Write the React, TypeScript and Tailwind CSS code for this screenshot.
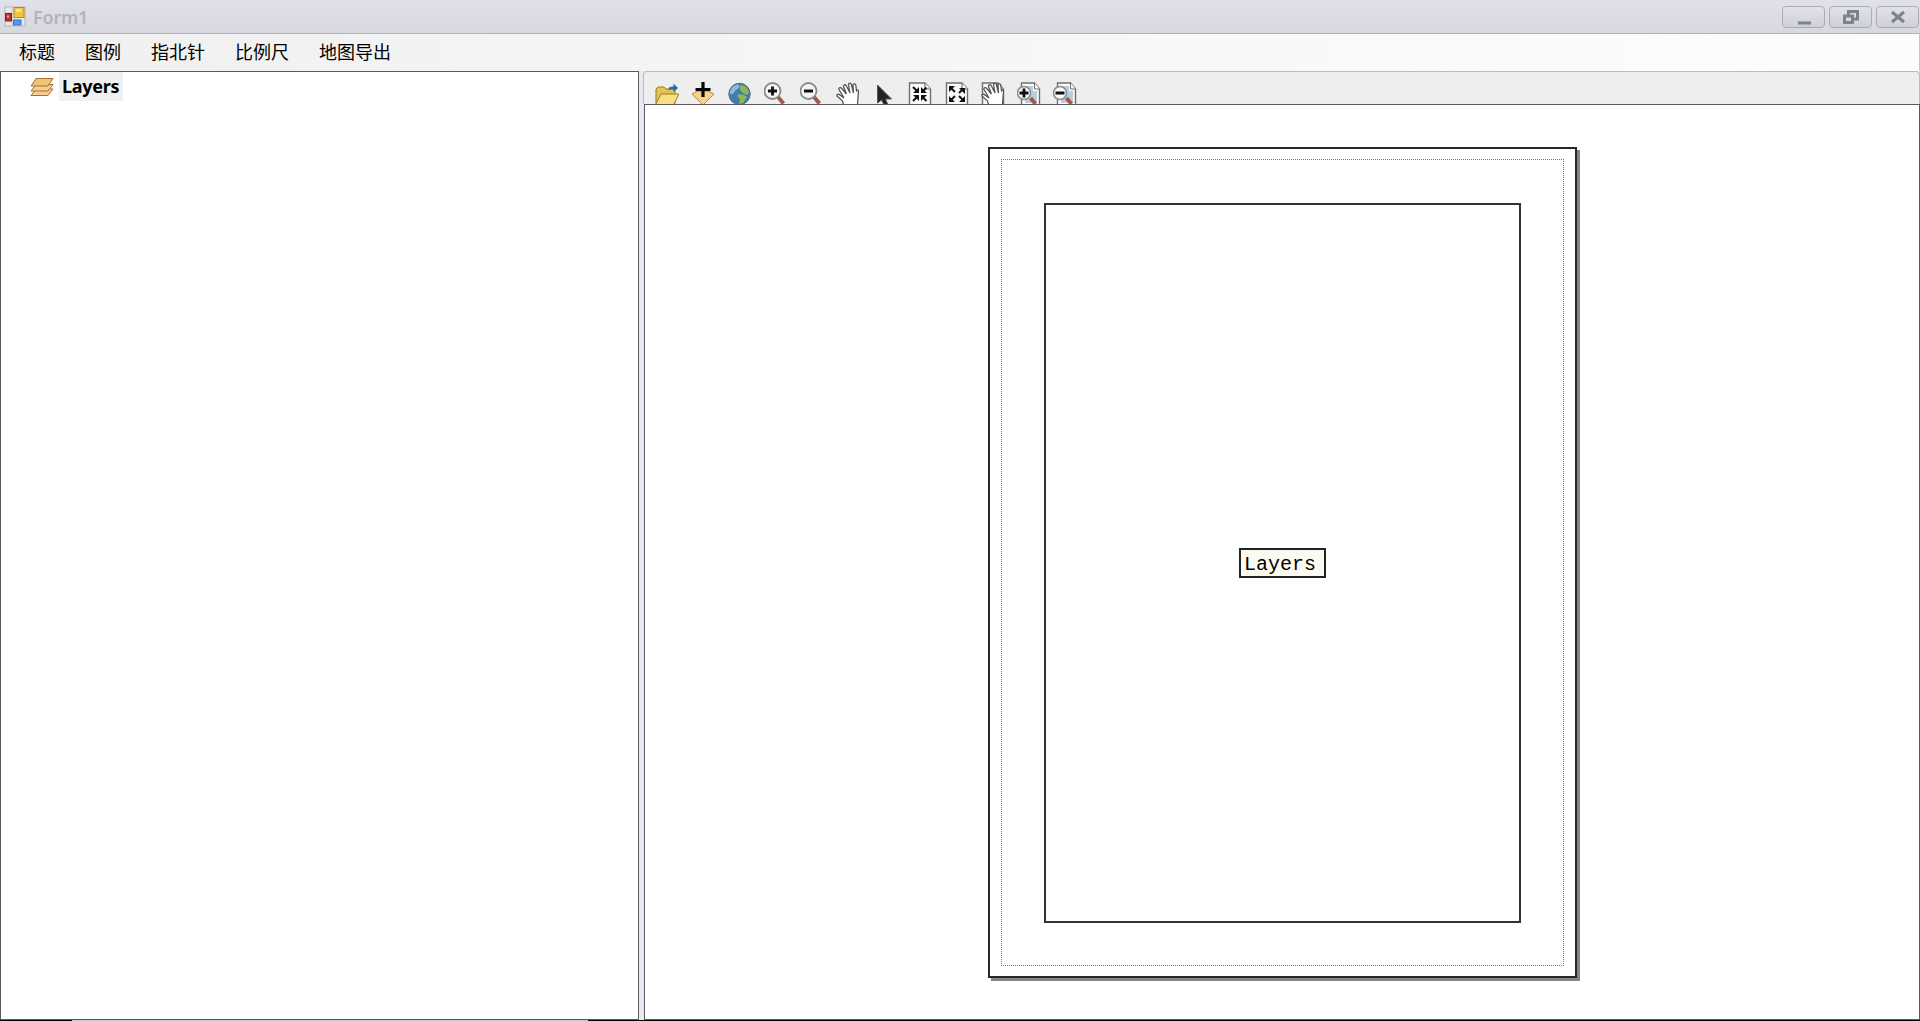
import type { ReactNode } from 'react';

const menus = ['标题', '图例', '指北针', '比例尺', '地图导出'];

function FormIcon() {
  return (
    <svg width="22" height="22" viewBox="0 0 22 22">
      <rect x="1" y="1" width="20" height="19" fill="#e8e8ea" stroke="#b5b5ba" />
      <path d="M1 7h20M8 1v19" stroke="#c4c4c8" />
      <rect x="10" y="1.5" width="10" height="10" fill="#f0c73c" stroke="#b98a1c" />
      <rect x="12" y="3" width="5" height="3" fill="#fbe58a" />
      <rect x="1.5" y="7.5" width="6" height="7.5" fill="#b9332c" stroke="#8d1c1a" />
      <rect x="3" y="9.5" width="2" height="2" fill="#f2a49a" />
      <rect x="9.5" y="14" width="7.5" height="5" fill="#5c94ee" stroke="#3c70d0" />
    </svg>
  );
}

function LayersIcon() {
  return (
    <svg width="24" height="20" viewBox="0 0 24 20" stroke="#a97035" strokeWidth="1" strokeLinejoin="round">
      <path d="M1 18.500 6 12h17l-5 6.500z" fill="#f5cf8d" />
      <path d="M1 14 6 7.500h17L18 14z" fill="#f5cf8d" />
      <path d="M1 9 6 1.500h17L18 9z" fill="#eec578" />
    </svg>
  );
}

function Tool({ children }: { children: ReactNode }) {
  return (
    <svg className="shrink-0" width="24" height="22" viewBox="0 0 24 22" fill="none">
      {children}
    </svg>
  );
}

function Lens({ plus }: { plus?: boolean }) {
  return (
    <>
      <path d="m14 15 5.500 6.500" stroke="#a25a4a" strokeWidth="4" />
      <circle cx="8.500" cy="9" r="8" fill="#f4f4f4" stroke="#8b8b8b" strokeWidth="1.800" />
      <path d="M4 9h9" stroke="#111" strokeWidth="2.800" />
      {plus && <path d="M8.500 4.500v9" stroke="#111" strokeWidth="2.800" />}
    </>
  );
}

function Page() {
  return (
    <>
      <path d="M1.500 24V1h15.500l5.500 6v17" fill="#fafafa" stroke="#6f6f6f" strokeWidth="1.400" />
      <path d="M17 1v6h5.500" fill="#fff" stroke="#6f6f6f" strokeWidth="1.200" />
    </>
  );
}

function PageLens({ plus }: { plus?: boolean }) {
  return (
    <>
      <path d="M4.500 24V1h13l5 6v17" fill="#fafafa" stroke="#6f6f6f" strokeWidth="1.400" />
      <path d="M8 4h8v5h4v12H8z" fill="#b5cfe0" />
      <path d="M17.500 1v6h5" fill="#fff" stroke="#6f6f6f" />
      <path d="m13.500 16 5 6" stroke="#a25a4a" strokeWidth="4" />
      <circle cx="7" cy="11" r="6.500" fill="#fafafa" stroke="#8b8b8b" strokeWidth="1.500" />
      <path d="M2.500 11h9" stroke="#111" strokeWidth="2.800" />
      {plus && <path d="M7 6.500v9" stroke="#111" strokeWidth="2.800" />}
    </>
  );
}

function Hand() {
  return (
    <path
      d="M8 24 6.500 19 1 14c-.500-1.800 1.500-2.300 3-1l4 3L3 7.500C2.500 5.500 4.800 5 5.700 6.500L10.500 12 7.500 4.500c-.2-2 2-2.400 2.800-.700L14 11 12.500 2.500c.2-1.800 2.600-1.800 2.900 0L17.500 11 17 3c.5-1.700 2.800-1.300 2.800.5l.7 5c.5-1 2-.8 2 .8L21.500 22"
      fill="#fff"
      stroke="#555"
      strokeWidth="1.300"
    />
  );
}

function Toolbar() {
  return (
    <div className="flex h-[33px] gap-[12.200px] overflow-hidden rounded-t border border-b-0 border-[#b9bac4] bg-[#eeeeef] pt-[10px] pl-[11px]">
      <Tool>
        <path d="M1 22V7l2-2h6l2 2h9v15" fill="#e5c254" stroke="#9b7b29" />
        <path d="m1 22 5-10h18l-5 10" fill="#f7df83" stroke="#9b7b29" />
        <path d="M13.500 8c0-3 2-3.500 5-3.500V1.500L23 6l-4.500 4V7.500c-2 0-3.500 0-5 .5z" fill="#286f9d" />
      </Tool>
      <Tool>
        <path d="m1 12 6-3h10l6 3-11 11z" fill="#f6d28c" stroke="#bd8a46" />
        <path d="M12 0v15M4.500 7.500h15" stroke="#080808" strokeWidth="3.200" />
      </Tool>
      <Tool>
        <circle cx="12.500" cy="12" r="10.700" fill="#3c7cae" stroke="#4f6f8c" />
        <path d="M3.500 8c2-4 5-5.500 8-5.500l1 3-4 3-3 4-3-1z" fill="#91b9d6" />
        <path d="m13 3 5 1 4 5-1 4-4-1-4-4zM12 12l5 1 3 2-4 6-4 1 1-5-3-3z" fill="#91b552" />
      </Tool>
      <Tool><Lens plus /></Tool>
      <Tool><Lens /></Tool>
      <Tool><Hand /></Tool>
      <Tool>
        <path d="M5.500 3v18l4-3 3 6h4l-3-7h6z" fill="#222" stroke="#555" />
      </Tool>
      <Tool>
        <Page />
        <g fill="#111" stroke="#111" strokeWidth="2">
          <path d="m5 5 4 4M18.500 5.500l-4 4M5 19l4-4M18.500 19l-4-4" />
          <path strokeWidth="0" d="M11 11H5l6-6zM13 11h6l-6-6zM11 13H5l6 6zM13 13h6l-6 6z" />
        </g>
      </Tool>
      <Tool>
        <Page />
        <g fill="#111" stroke="#111" strokeWidth="2">
          <path d="m6 6 4 4M18 7l-4 4M6 18l4-4M18 18l-4-4" />
          <path strokeWidth="0" d="M4 4h6l-6 6zM20 6h-6l6 6zM4 20h6l-6-6zM20 20h-6l6-6z" />
        </g>
      </Tool>
      <Tool><Page /><Hand /></Tool>
      <Tool><PageLens plus /></Tool>
      <Tool><PageLens /></Tool>
    </div>
  );
}

function CaptionButton({ children }: { children: ReactNode }) {
  return (
    <button className="flex h-[22px] w-[43px] items-center justify-center rounded border border-[#aaabb5] bg-linear-to-b from-[#e2e3e9] to-[#cfd0d8]">
      <svg width="20" height="16" viewBox="0 0 20 16" fill="none" stroke="#7f818d" strokeWidth="3">
        {children}
      </svg>
    </button>
  );
}

export default function App() {
  return (
    <div className="flex h-[1021px] w-[1920px] flex-col overflow-hidden bg-[#f0f0f0] font-['Noto_Sans','Noto_Sans_CJK_SC',sans-serif] text-black">
      {/* Title bar */}
      <header className="flex h-[34px] shrink-0 justify-between border-b border-[#b0b1ba] bg-linear-to-b from-[#e1e2e9] to-[#d7d8df] pr-px pl-1">
        <div className="flex gap-[7px] pt-[6px]">
          <FormIcon />
          <span className="text-[18px] leading-[23px] font-semibold tracking-[-0.200px] text-[#b2b3ba]">Form1</span>
        </div>
        <div className="flex gap-[4px] pt-[6px]">
          <CaptionButton><path d="M4 14h13" /></CaptionButton>
          <CaptionButton>
            <path d="M7.500 6V2.500h9V10H13M3.500 7h8v6.500h-8z" />
          </CaptionButton>
          <CaptionButton><path d="m4 3 12 10M16 3 4 13" /></CaptionButton>
        </div>
      </header>

      {/* Menu */}
      <nav className="flex h-[37px] shrink-0 gap-[30px] border-r border-[#c5c6cf] bg-linear-to-r from-[#f0f0f0] to-[#fdfdfd] pl-[19px] font-['Noto_Sans_CJK_SC',sans-serif] text-[18px] leading-[35px]">
        {menus.map((menu) => (
          <span key={menu}>{menu}</span>
        ))}
      </nav>

      {/* Layer tree and layout view */}
      <main className="flex h-[949px] shrink-0 bg-[#e9e9f1]">
        <aside className="w-[639px] shrink-0 border border-[#5a5a5e] bg-white">
          <div className="flex items-start pl-[29px]">
            <div className="pt-[5px]"><LayersIcon /></div>
            <span className="ml-[5px] h-[29px] w-16 bg-[#f0f0f0] pl-[3px] text-[18px] leading-[28px] font-bold tracking-[-0.300px]">
              Layers
            </span>
          </div>
        </aside>
        <section className="ml-[4px] flex flex-1 flex-col">
          <Toolbar />
          <div className="ml-px flex flex-1 justify-center border border-[#5a5a5e] bg-white pt-[42px] pl-px">
            <div className="h-[831px] w-[589px] border-2 border-[#27272a] px-[11px] py-[10px] shadow-[3px_3px_0_#858585]">
              <div className="h-full border border-dotted border-[#777] px-[42px] pt-[43px] pb-[42px]">
                <div className="flex h-full items-center justify-center border-2 border-[#333336]">
                  <div className="h-[30px] w-[87px] border-2 border-[#222] bg-[#fbfaf0] pl-[3px] font-['Liberation_Mono',monospace] text-[20px] leading-[30px]">
                    Layers
                  </div>
                </div>
              </div>
            </div>
          </div>
        </section>
      </main>

      {/* Bottom edge */}
      <footer className="flex h-px shrink-0 bg-black">
        <div className="ml-[72px] w-[516px] bg-[#c8c8c8]" />
      </footer>
    </div>
  );
}
